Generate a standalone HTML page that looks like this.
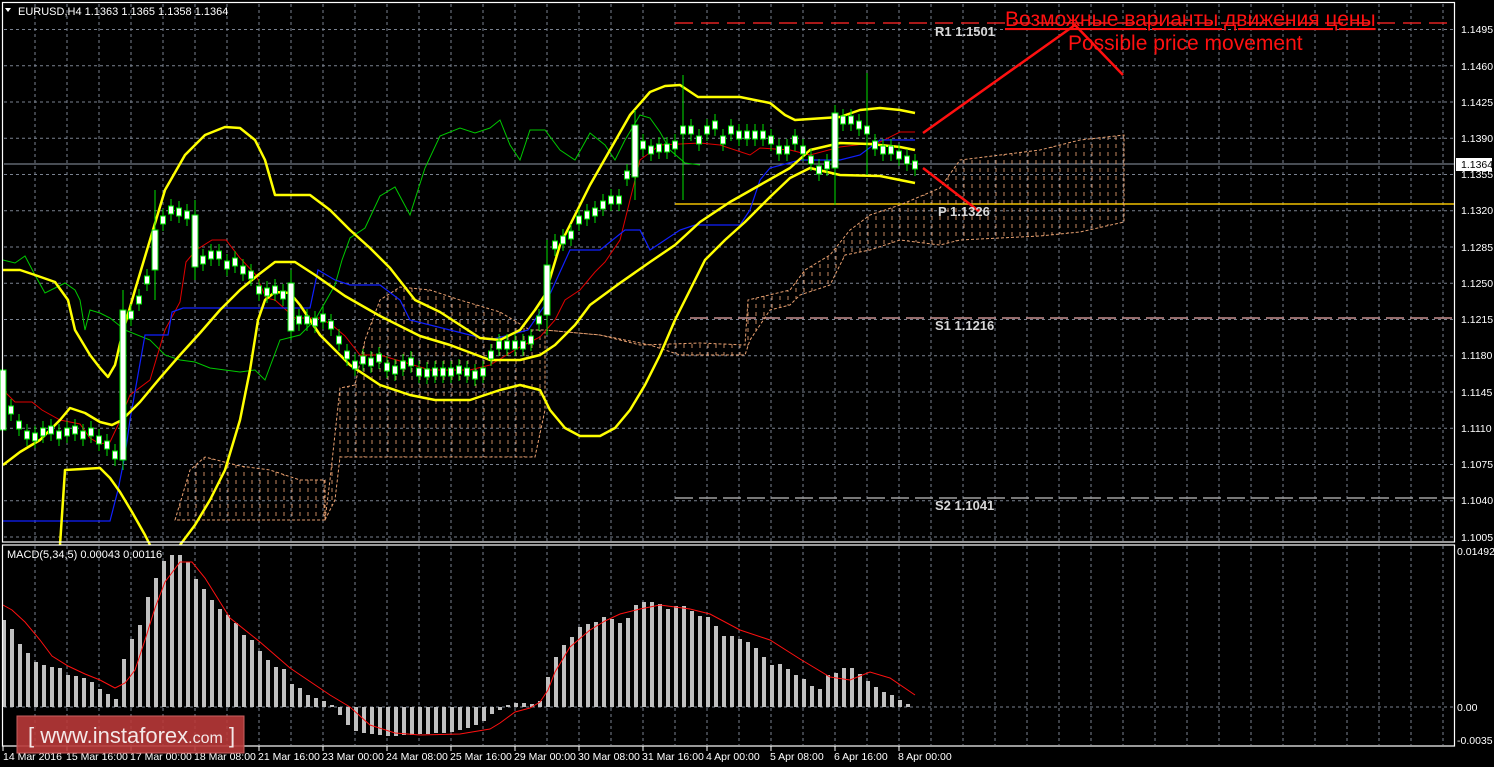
<!DOCTYPE html>
<html><head><meta charset="utf-8"><style>
html,body{margin:0;padding:0;background:#000;overflow:hidden}
svg{display:block}
text{font-family:"Liberation Sans",sans-serif}
</style></head><body>
<svg width="1494" height="767" viewBox="0 0 1494 767" xmlns="http://www.w3.org/2000/svg">
<defs>
<pattern id="h" width="8" height="8" patternUnits="userSpaceOnUse"><line x1="4" y1="0" x2="4" y2="4" stroke="#e8a070" stroke-width="1" stroke-opacity="0.85"/></pattern>
<g id="c"><line x1="0" y1="-11" x2="0" y2="11" stroke="#00e000" stroke-width="1"/><rect x="-2.5" y="-4" width="5" height="8" fill="#fff" stroke="#00e000" stroke-width="1"/></g>
</defs>
<rect width="1494" height="767" fill="#000"/>
<!-- grid -->
<g stroke="#7a8290" stroke-width="1" stroke-dasharray="3,3">
<path d="M35 4V541M67 4V541M99 4V541M131 4V541M163 4V541M195 4V541M227 4V541M259 4V541M291 4V541M323 4V541M355 4V541M387 4V541M419 4V541M451 4V541M483 4V541M515 4V541M547 4V541M579 4V541M611 4V541M643 4V541M675 4V541M707 4V541M739 4V541M771 4V541M803 4V541M835 4V541M867 4V541M899 4V541M931 4V541M963 4V541M995 4V541M1027 4V541M1059 4V541M1091 4V541M1123 4V541M1155 4V541M1187 4V541M1219 4V541M1251 4V541M1283 4V541M1315 4V541M1347 4V541M1379 4V541M1411 4V541M1443 4V541"/>
<path d="M35 546V745M67 546V745M99 546V745M131 546V745M163 546V745M195 546V745M227 546V745M259 546V745M291 546V745M323 546V745M355 546V745M387 546V745M419 546V745M451 546V745M483 546V745M515 546V745M547 546V745M579 546V745M611 546V745M643 546V745M675 546V745M707 546V745M739 546V745M771 546V745M803 546V745M835 546V745M867 546V745M899 546V745M931 546V745M963 546V745M995 546V745M1027 546V745M1059 546V745M1091 546V745M1123 546V745M1155 546V745M1187 546V745M1219 546V745M1251 546V745M1283 546V745M1315 546V745M1347 546V745M1379 546V745M1411 546V745M1443 546V745"/>
<path d="M4 29.5H1454M4 65.8H1454M4 102H1454M4 138.3H1454M4 174.5H1454M4 210.8H1454M4 247H1454M4 283.3H1454M4 319.5H1454M4 355.8H1454M4 392H1454M4 428.3H1454M4 464.5H1454M4 500.8H1454M4 537H1454M4 707H1454"/>
</g>
<!-- levels -->
<line x1="675" y1="23" x2="1454" y2="23" stroke="#e02020" stroke-width="1.5" stroke-dasharray="18,8"/>
<line x1="690" y1="318" x2="1454" y2="318" stroke="#c89090" stroke-width="1.5" stroke-dasharray="18,6"/>
<line x1="675" y1="498" x2="1454" y2="498" stroke="#a0a0a0" stroke-width="1.5" stroke-dasharray="18,6"/>
<line x1="4" y1="164" x2="1454" y2="164" stroke="#909aa8" stroke-width="1"/>
<line x1="675" y1="204" x2="1454" y2="204" stroke="#f0c000" stroke-width="1.5"/>
<!-- cloud -->
<g fill="url(#h)" stroke="#e8a070" stroke-width="1" stroke-dasharray="3,2">
<polygon points="175,520 190,470 205,457 240,466 270,470 300,480 325,480 325,520"/>
<polygon points="325,520 330,480 340,388 355,385 365,340 380,300 400,287 430,290 460,300 500,312 530,330 545,330 545,410 535,457 340,457 335,500"/>
<polygon points="545,330 600,335 640,345 700,343 745,345 748,300 790,290 805,270 830,255 850,230 870,215 900,205 940,188 960,160 1000,155 1040,150 1080,140 1124,135 1124,222 1080,232 1040,236 960,240 940,245 900,240 870,250 845,255 830,285 800,295 790,305 770,310 750,340 745,355 680,355 650,345 600,335"/>
</g>
<!-- ichimoku lines -->
<polyline fill="none" stroke="#00c800" stroke-width="1" points="3,260 15,263 25,256 35,275 45,293 55,288 65,283 75,290 80,300 85,330 90,310 100,313 110,318 125,330 150,340 165,355 180,360 195,362 210,368 225,370 240,372 255,370 265,380 280,340 300,335 315,320 335,285 342,260 350,238 365,228 380,196 395,187 410,215 425,168 440,136 460,128 475,133 490,128 500,120 510,145 520,160 530,130 545,130 560,150 575,160 590,133 605,145 615,160 625,140 640,115 650,118 660,132 670,150 685,163 700,165"/>
<polyline fill="none" stroke="#e00000" stroke-width="1" points="3,390 15,402 32,402 42,410 60,420 80,424 90,438 100,444 110,442 118,425 130,395 150,380 165,330 180,302 186,262 196,250 212,240 226,240 240,258 256,275 266,298 275,300 295,318 320,318 332,325 345,336 360,355 380,355 430,370 470,370 490,365 520,347 540,337 555,320 565,300 580,290 595,272 605,262 620,240 640,160 660,145 700,143 720,145 750,155 760,148 790,150 810,155 840,147 880,142 900,132 915,132"/>
<polyline fill="none" stroke="#1020ff" stroke-width="1.2" points="3,521 110,521 118,490 125,455 130,420 145,335 168,335 172,312 183,308 310,308 318,270 335,280 350,285 380,285 400,300 410,320 450,330 470,335 490,340 528,330 545,305 570,250 600,250 625,230 640,230 650,250 680,230 695,225 740,225 750,210 760,180 770,168 800,160 840,160 860,155 880,140 915,140"/>
<!-- bollinger -->
<g fill="none" stroke="#ffff00" stroke-width="2.5" stroke-linejoin="round">
<polyline points="3,270 20,270 35,275 55,282 68,300 75,330 90,355 100,368 108,377 115,365 122,335 135,290 150,240 165,190 185,155 205,135 225,127 240,128 255,140 265,160 275,195 310,195 330,210 350,230 370,248 390,268 415,300 440,312 460,325 480,338 500,340 520,330 535,310 545,295 560,245 575,215 590,185 610,150 630,115 650,92 665,86 680,85 698,97 740,97 770,103 785,115 795,120 810,119 840,117 860,110 880,108 900,110 915,113"/>
<polyline points="3,465 20,452 40,440 60,420 70,408 85,413 100,422 112,425 122,420 140,402 160,378 180,355 200,333 220,310 240,290 258,275 275,262 295,262 315,275 345,296 380,316 420,336 450,345 490,360 520,360 540,355 555,345 575,325 590,305 620,283 650,262 675,245 700,222 730,202 760,185 790,168 810,150 840,143 870,144 900,147 915,150"/>
<polyline points="60,545 65,470 100,468 110,478 120,492 132,512 145,535 150,545"/>
<polyline points="180,545 195,525 210,500 225,470 240,420 250,370 258,320 265,300 275,292 290,293 300,305 320,335 350,365 380,385 410,395 435,400 470,400 500,390 520,385 540,390 550,410 565,428 580,436 600,436 615,428 630,410 645,385 660,355 675,320 690,290 705,260 725,240 745,222 770,197 790,178 810,168 840,175 880,176 915,183"/>
</g>
<!-- candles -->
<g>
<rect x="0" y="370" width="6" height="60" fill="#fff" stroke="#00e000"/>
<line x1="123" y1="290" x2="123" y2="470" stroke="#00e000"/><rect x="120" y="310" width="6" height="150" fill="#fff" stroke="#00e000"/>
<line x1="155" y1="190" x2="155" y2="300" stroke="#00e000"/><rect x="152" y="230" width="6" height="40" fill="#fff" stroke="#00e000"/>
<line x1="195" y1="200" x2="195" y2="280" stroke="#00e000"/><rect x="192" y="215" width="6" height="52" fill="#fff" stroke="#00e000"/>
<line x1="291" y1="270" x2="291" y2="340" stroke="#00e000"/><rect x="288" y="283" width="6" height="48" fill="#fff" stroke="#00e000"/>
<line x1="547" y1="240" x2="547" y2="335" stroke="#00e000"/><rect x="544" y="265" width="6" height="50" fill="#fff" stroke="#00e000"/>
<line x1="635" y1="110" x2="635" y2="200" stroke="#00e000"/><rect x="632" y="125" width="6" height="52" fill="#fff" stroke="#00e000"/>
<line x1="683" y1="75" x2="683" y2="200" stroke="#00e000"/>
<line x1="835" y1="105" x2="835" y2="205" stroke="#00e000"/><rect x="832" y="113" width="6" height="55" fill="#fff" stroke="#00e000"/>
<line x1="867" y1="73" x2="867" y2="175" stroke="#00e000"/>
<use href="#c" x="11" y="410"/><use href="#c" x="19" y="425"/><use href="#c" x="27" y="435"/><use href="#c" x="35" y="437"/><use href="#c" x="43" y="432"/><use href="#c" x="51" y="430"/><use href="#c" x="59" y="435"/><use href="#c" x="67" y="432"/><use href="#c" x="75" y="430"/><use href="#c" x="83" y="435"/><use href="#c" x="91" y="432"/><use href="#c" x="99" y="440"/><use href="#c" x="107" y="445"/><use href="#c" x="115" y="455"/>
<use href="#c" x="131" y="315"/><use href="#c" x="139" y="300"/><use href="#c" x="147" y="280"/><use href="#c" x="163" y="220"/><use href="#c" x="171" y="210"/><use href="#c" x="179" y="212"/><use href="#c" x="187" y="215"/><use href="#c" x="203" y="260"/><use href="#c" x="211" y="255"/><use href="#c" x="219" y="255"/><use href="#c" x="227" y="265"/><use href="#c" x="235" y="262"/><use href="#c" x="243" y="270"/><use href="#c" x="251" y="275"/><use href="#c" x="259" y="290"/><use href="#c" x="267" y="292"/><use href="#c" x="275" y="290"/><use href="#c" x="283" y="295"/>
<use href="#c" x="299" y="320"/><use href="#c" x="307" y="320"/><use href="#c" x="315" y="322"/><use href="#c" x="323" y="318"/><use href="#c" x="331" y="325"/><use href="#c" x="339" y="340"/><use href="#c" x="347" y="355"/><use href="#c" x="355" y="365"/><use href="#c" x="363" y="360"/><use href="#c" x="371" y="362"/><use href="#c" x="379" y="358"/><use href="#c" x="387" y="367"/><use href="#c" x="395" y="370"/><use href="#c" x="403" y="365"/><use href="#c" x="411" y="362"/><use href="#c" x="419" y="372"/><use href="#c" x="427" y="373"/><use href="#c" x="435" y="372"/><use href="#c" x="443" y="372"/><use href="#c" x="451" y="372"/><use href="#c" x="459" y="370"/><use href="#c" x="467" y="372"/><use href="#c" x="475" y="375"/><use href="#c" x="483" y="372"/><use href="#c" x="491" y="355"/><use href="#c" x="499" y="345"/><use href="#c" x="507" y="345"/><use href="#c" x="515" y="345"/><use href="#c" x="523" y="345"/><use href="#c" x="531" y="340"/><use href="#c" x="539" y="320"/>
<use href="#c" x="555" y="245"/><use href="#c" x="563" y="240"/><use href="#c" x="571" y="235"/><use href="#c" x="579" y="220"/><use href="#c" x="587" y="215"/><use href="#c" x="595" y="212"/><use href="#c" x="603" y="205"/><use href="#c" x="611" y="200"/><use href="#c" x="619" y="200"/><use href="#c" x="627" y="175"/><use href="#c" x="643" y="145"/><use href="#c" x="651" y="150"/><use href="#c" x="659" y="148"/><use href="#c" x="667" y="148"/><use href="#c" x="675" y="145"/><use href="#c" x="683" y="130"/><use href="#c" x="691" y="130"/><use href="#c" x="699" y="140"/><use href="#c" x="707" y="130"/><use href="#c" x="715" y="125"/><use href="#c" x="723" y="140"/><use href="#c" x="731" y="130"/><use href="#c" x="739" y="135"/><use href="#c" x="747" y="135"/><use href="#c" x="755" y="135"/><use href="#c" x="763" y="135"/><use href="#c" x="771" y="140"/><use href="#c" x="779" y="150"/><use href="#c" x="787" y="150"/><use href="#c" x="795" y="140"/><use href="#c" x="803" y="150"/><use href="#c" x="811" y="160"/><use href="#c" x="819" y="170"/><use href="#c" x="827" y="165"/><use href="#c" x="843" y="120"/><use href="#c" x="851" y="120"/><use href="#c" x="859" y="125"/><use href="#c" x="867" y="130"/><use href="#c" x="875" y="145"/><use href="#c" x="883" y="150"/><use href="#c" x="891" y="150"/><use href="#c" x="899" y="155"/><use href="#c" x="907" y="160"/><use href="#c" x="915" y="165"/>
</g>
<!-- arrows -->
<polyline fill="none" stroke="#ff1010" stroke-width="2.5" points="923,133 1075,25 1123,75"/>
<line x1="923" y1="168" x2="980" y2="212" stroke="#ff1010" stroke-width="2.5"/>
<!-- text on chart -->
<text x="1005" y="26" font-size="21" fill="#ff1010" text-decoration="underline" font-family="Liberation Sans,DejaVu Sans,sans-serif">Возможные варианты движения цены</text>
<text x="1068" y="50" font-size="21" fill="#ff1010">Possible price movement</text>
<g font-family="Liberation Mono,DejaVu Sans Mono,monospace" font-size="13" font-weight="bold" fill="#d8d8d8">
<text x="935" y="36">R1 1.1501</text>
<text x="938" y="216">P 1.1326</text>
<text x="935" y="330">S1 1.1216</text>
<text x="935" y="510">S2 1.1041</text>
</g>
<text x="18" y="15" font-size="11" fill="#fff">EURUSD,H4  1.1363 1.1365 1.1358 1.1364</text>
<polygon points="5,8 11,8 8,12" fill="#fff"/>
<!-- MACD -->
<text x="7" y="558" font-size="11" fill="#fff">MACD(5,34,5) 0.00043 0.00116</text>
<g fill="#c0c0c0">
<rect x="2" y="620" width="4" height="87"/><rect x="10" y="629" width="4" height="78"/><rect x="18" y="644" width="4" height="63"/><rect x="26" y="653" width="4" height="54"/><rect x="34" y="662" width="4" height="45"/><rect x="42" y="665" width="4" height="42"/><rect x="50" y="667" width="4" height="40"/><rect x="58" y="668" width="4" height="39"/><rect x="66" y="675" width="4" height="32"/><rect x="74" y="676" width="4" height="31"/><rect x="82" y="678" width="4" height="29"/><rect x="90" y="682" width="4" height="25"/><rect x="98" y="689" width="4" height="18"/><rect x="106" y="694" width="4" height="13"/><rect x="114" y="699" width="4" height="8"/><rect x="122" y="659" width="4" height="48"/><rect x="130" y="639" width="4" height="68"/><rect x="138" y="625" width="4" height="82"/><rect x="146" y="597" width="4" height="110"/><rect x="154" y="578" width="4" height="129"/><rect x="162" y="561" width="4" height="146"/><rect x="170" y="555" width="4" height="152"/><rect x="178" y="555" width="4" height="152"/><rect x="186" y="562" width="4" height="145"/><rect x="194" y="579" width="4" height="128"/><rect x="202" y="589" width="4" height="118"/><rect x="210" y="600" width="4" height="107"/><rect x="218" y="609" width="4" height="98"/><rect x="226" y="615" width="4" height="92"/><rect x="234" y="623" width="4" height="84"/><rect x="242" y="635" width="4" height="72"/><rect x="250" y="640" width="4" height="67"/><rect x="258" y="651" width="4" height="56"/><rect x="266" y="660" width="4" height="47"/><rect x="274" y="667" width="4" height="40"/><rect x="282" y="669" width="4" height="38"/><rect x="290" y="684" width="4" height="23"/><rect x="298" y="688" width="4" height="19"/><rect x="306" y="695" width="4" height="12"/><rect x="314" y="698" width="4" height="9"/><rect x="322" y="701" width="4" height="6"/><rect x="330" y="705" width="4" height="2"/>
<rect x="338" y="707" width="4" height="8"/><rect x="346" y="707" width="4" height="18"/><rect x="354" y="707" width="4" height="24"/><rect x="362" y="707" width="4" height="26"/><rect x="370" y="707" width="4" height="27"/><rect x="378" y="707" width="4" height="28"/><rect x="386" y="707" width="4" height="29"/><rect x="394" y="707" width="4" height="29"/><rect x="402" y="707" width="4" height="28"/><rect x="410" y="707" width="4" height="28"/><rect x="418" y="707" width="4" height="27"/><rect x="426" y="707" width="4" height="27"/><rect x="434" y="707" width="4" height="26"/><rect x="442" y="707" width="4" height="26"/><rect x="450" y="707" width="4" height="25"/><rect x="458" y="707" width="4" height="23"/><rect x="466" y="707" width="4" height="21"/><rect x="474" y="707" width="4" height="18"/><rect x="482" y="707" width="4" height="14"/><rect x="490" y="707" width="4" height="7"/><rect x="498" y="707" width="4" height="3"/>
<rect x="506" y="705" width="4" height="2"/><rect x="514" y="703" width="4" height="4"/><rect x="522" y="703" width="4" height="4"/><rect x="530" y="704" width="4" height="3"/><rect x="538" y="701" width="4" height="6"/><rect x="546" y="677" width="4" height="30"/><rect x="554" y="657" width="4" height="50"/><rect x="562" y="645" width="4" height="62"/><rect x="570" y="637" width="4" height="70"/><rect x="578" y="627" width="4" height="80"/><rect x="586" y="624" width="4" height="83"/><rect x="594" y="622" width="4" height="85"/><rect x="602" y="617" width="4" height="90"/><rect x="610" y="619" width="4" height="88"/><rect x="618" y="623" width="4" height="84"/><rect x="626" y="618" width="4" height="89"/><rect x="634" y="605" width="4" height="102"/><rect x="642" y="602" width="4" height="105"/><rect x="650" y="602" width="4" height="105"/><rect x="658" y="604" width="4" height="103"/><rect x="666" y="609" width="4" height="98"/><rect x="674" y="606" width="4" height="101"/><rect x="682" y="606" width="4" height="101"/><rect x="690" y="611" width="4" height="96"/><rect x="698" y="616" width="4" height="91"/><rect x="706" y="617" width="4" height="90"/><rect x="714" y="626" width="4" height="81"/><rect x="722" y="636" width="4" height="71"/><rect x="730" y="636" width="4" height="71"/><rect x="738" y="639" width="4" height="68"/><rect x="746" y="642" width="4" height="65"/><rect x="754" y="648" width="4" height="59"/><rect x="762" y="657" width="4" height="50"/><rect x="770" y="665" width="4" height="42"/><rect x="778" y="664" width="4" height="43"/><rect x="786" y="669" width="4" height="38"/><rect x="794" y="675" width="4" height="32"/><rect x="802" y="679" width="4" height="28"/><rect x="810" y="686" width="4" height="21"/><rect x="818" y="689" width="4" height="18"/><rect x="826" y="675" width="4" height="32"/><rect x="834" y="673" width="4" height="34"/><rect x="842" y="668" width="4" height="39"/><rect x="850" y="668" width="4" height="39"/><rect x="858" y="674" width="4" height="33"/><rect x="866" y="681" width="4" height="26"/><rect x="874" y="687" width="4" height="20"/><rect x="882" y="692" width="4" height="15"/><rect x="890" y="695" width="4" height="12"/><rect x="898" y="700" width="4" height="7"/><rect x="906" y="704" width="4" height="3"/>
</g>
<polyline fill="none" stroke="#ff1010" stroke-width="1" points="3,605 12,610 25,622 40,640 52,656 68,666 85,674 100,680 115,688 125,683 135,670 145,640 155,608 165,582 180,562 192,562 205,578 230,618 260,642 290,668 330,695 350,707 370,725 395,733 420,735 460,734 490,729 500,723 515,712 530,708 540,702 548,690 555,672 570,647 590,630 605,621 620,614 640,609 660,605 690,609 710,614 740,630 770,640 800,659 830,677 850,680 870,672 890,678 915,695"/>
<!-- frames -->
<g fill="none" stroke="#fff" stroke-width="1.2">
<rect x="2.5" y="2.5" width="1452" height="539.5"/>
<rect x="2.5" y="545" width="1452" height="201"/>
</g>
<!-- right axis -->
<g font-size="10.5" fill="#fff">
<text x="1461" y="33">1.1495</text><text x="1461" y="70">1.1460</text><text x="1461" y="106">1.1425</text><text x="1461" y="142">1.1390</text><text x="1461" y="178">1.1355</text><text x="1461" y="214">1.1320</text><text x="1461" y="251">1.1285</text><text x="1461" y="287">1.1250</text><text x="1461" y="323">1.1215</text><text x="1461" y="359">1.1180</text><text x="1461" y="396">1.1145</text><text x="1461" y="432">1.1110</text><text x="1461" y="468">1.1075</text><text x="1461" y="504">1.1040</text><text x="1461" y="541">1.1005</text>
<text x="1457" y="555">0.01492</text><text x="1457" y="711">0.00</text><text x="1457" y="744">-0.0035</text>
</g>
<rect x="1456" y="158" width="36" height="13" fill="#fff"/>
<text x="1461" y="168" font-size="10.5" fill="#000">1.1364</text>
<!-- time axis -->
<g stroke="#fff"><path d="M3 746V751M67 746V751M131 746V751M195 746V751M259 746V751M323 746V751M387 746V751M451 746V751M515 746V751M579 746V751M643 746V751M707 746V751M771 746V751M835 746V751M899 746V751"/></g>
<g font-size="10.5" fill="#fff">
<text x="3" y="760">14 Mar 2016</text><text x="66" y="760">15 Mar 16:00</text><text x="130" y="760">17 Mar 00:00</text><text x="194" y="760">18 Mar 08:00</text><text x="258" y="760">21 Mar 16:00</text><text x="322" y="760">23 Mar 00:00</text><text x="386" y="760">24 Mar 08:00</text><text x="450" y="760">25 Mar 16:00</text><text x="514" y="760">29 Mar 00:00</text><text x="578" y="760">30 Mar 08:00</text><text x="642" y="760">31 Mar 16:00</text><text x="706" y="760">4 Apr 00:00</text><text x="770" y="760">5 Apr 08:00</text><text x="834" y="760">6 Apr 16:00</text><text x="898" y="760">8 Apr 00:00</text>
</g>
<!-- logo -->
<rect x="17" y="716" width="227" height="37" fill="#b83838" fill-opacity="0.9" stroke="#c86060"/>
<text x="28" y="743" font-size="22" fill="#f4e8e8">[ www.instaforex<tspan font-size="16">.com</tspan> ]</text>
</svg>
</body></html>
